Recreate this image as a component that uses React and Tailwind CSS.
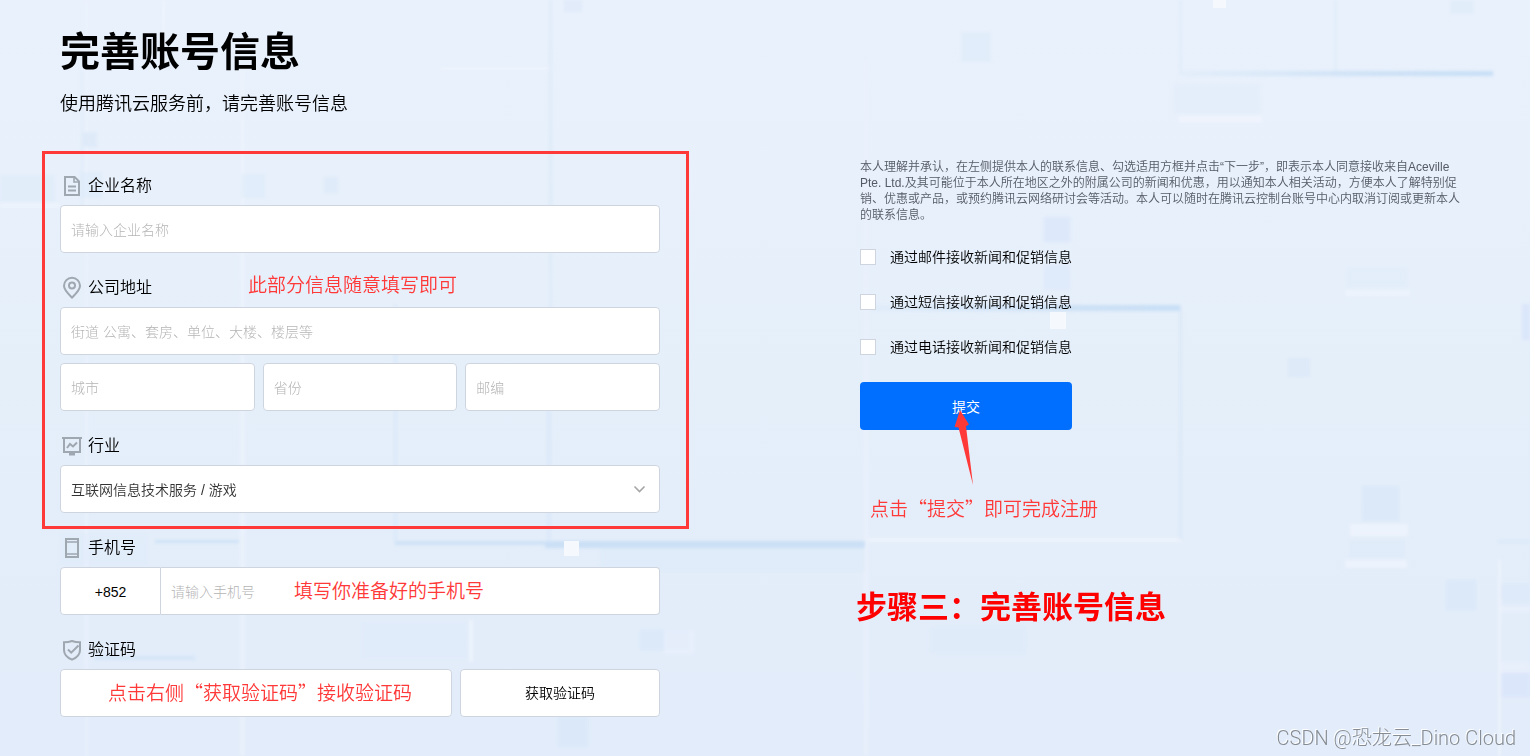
import React from "react";

const iconProps = {
  width: 24,
  height: 24,
  viewBox: "0 0 24 24",
  fill: "none",
  stroke: "#9fa7b0",
  strokeWidth: 2,
  "aria-hidden": true,
};

function DocumentIcon() {
  return (
    <svg {...iconProps}>
      <path d="M5 3h9.6L19 7.4V21H5z" />
      <path d="M14 3v5h5" strokeWidth="1.6" />
      <path d="M8 12.5h8M8 16.5h8" />
    </svg>
  );
}

function PinIcon() {
  return (
    <svg {...iconProps}>
      <path d="M12 21.500C8 17.600 4 14.200 4 9.800a8 8 0 0 1 16 0C20 14.200 16 17.600 12 21.500z" />
      <circle cx="12" cy="9.500" r="3" />
    </svg>
  );
}

function IndustryIcon() {
  return (
    <svg {...iconProps}>
      <path d="M2 4h20" />
      <path d="M4 4v14h16V4" />
      <path d="M7 14l3-4 3 2.500 4-4" />
      <path d="M9 20h6" strokeWidth="3" />
    </svg>
  );
}

function PhoneIcon() {
  return (
    <svg {...iconProps}>
      <path d="M6 3h12v18H6z" />
      <path d="M6 6h12M6 18h12" strokeWidth="1.6" />
    </svg>
  );
}

function ShieldIcon() {
  return (
    <svg {...iconProps}>
      <path d="M12 3c2.600 1 5.200 1.300 8 1.300V12c0 4.600-3.400 7.800-8 9.600C7.400 19.800 4 16.600 4 12V4.300C6.800 4.300 9.400 4 12 3z" />
      <path d="M8 11.500l3.200 3.200L18.500 7.500" />
    </svg>
  );
}

function Backdrop() {
  return (
    <svg
      className="absolute inset-0 h-full w-full"
      viewBox="0 0 1530 756"
      preserveAspectRatio="none"
      aria-hidden="true"
    >
      <defs>
        <filter id="soft" x="-5%" y="-20%" width="110%" height="140%">
          <feGaussianBlur stdDeviation="1.5" />
        </filter>
        <linearGradient id="streak" x1="0" x2="1" y1="0" y2="0">
          <stop offset="0" stopColor="#cbe0f5" stopOpacity="0.15" />
          <stop offset="0.6" stopColor="#cbe0f5" stopOpacity="0.9" />
          <stop offset="1" stopColor="#c8dff6" />
        </linearGradient>
      </defs>
      <g filter="url(#soft)">
        <g fill="#eff4fd" opacity="0.8">
          <rect x="85" y="0" width="3" height="756" opacity="0.6" />
          <rect x="162" y="0" width="3" height="70" />
          <rect x="240" y="70" width="5" height="686" opacity="0.8" />
          <rect x="440" y="67" width="110" height="3" />
          <rect x="864" y="60" width="4" height="696" opacity="0.7" />
          <rect x="868" y="538" width="314" height="4" />
          <rect x="1178" y="115" width="85" height="8" />
          <rect x="1345" y="290" width="65" height="6" />
          <rect x="1350" y="524" width="58" height="12" />
          <rect x="1345" y="560" width="62" height="8" />
          <rect x="1498" y="560" width="3" height="196" />
          <rect x="1500" y="600" width="30" height="12" opacity="0.6" />
          <rect x="1500" y="662" width="30" height="10" opacity="0.6" />
          <rect x="0" y="203" width="60" height="5" />
          <rect x="469" y="620" width="4" height="42" />
          <rect x="664" y="630" width="30" height="24" opacity="0.6" />
        </g>
        <g fill="#d9e7f8" opacity="0.75">
          <rect x="549" y="0" width="3" height="310" opacity="0.7" />
          <rect x="81" y="70" width="2" height="140" opacity="0.6" />
          <rect x="82" y="132" width="15" height="15" opacity="0.8" />
          <rect x="0" y="175" width="55" height="27" opacity="0.45" />
          <rect x="80" y="172" width="22" height="26" opacity="0.6" />
          <rect x="241" y="174" width="24" height="24" opacity="0.6" />
          <rect x="324" y="177" width="14" height="16" opacity="0.7" />
          <rect x="564" y="0" width="18" height="12" opacity="0.7" />
          <rect x="961" y="32" width="30" height="30" opacity="0.6" />
          <rect x="1450" y="0" width="24" height="14" opacity="0.6" />
          <rect x="1179" y="0" width="3" height="75" opacity="0.6" />
          <rect x="1334" y="0" width="3" height="75" opacity="0.5" />
          <rect x="1179" y="306" width="3" height="234" opacity="0.8" />
          <rect x="1174" y="84" width="86" height="30" opacity="0.25" />
          <rect x="1346" y="267" width="62" height="21" opacity="0.3" />
          <rect x="1288" y="358" width="22" height="19" opacity="0.8" />
          <rect x="1362" y="486" width="37" height="35" />
          <rect x="1349" y="540" width="56" height="18" opacity="0.4" />
          <rect x="1446" y="580" width="30" height="30" />
          <rect x="1498" y="540" width="32" height="3" />
          <rect x="1501" y="584" width="29" height="22" opacity="0.7" />
          <rect x="394" y="305" width="3" height="238" />
          <rect x="547" y="410" width="4" height="135" />
          <rect x="640" y="630" width="24" height="20" />
          <rect x="664" y="630" width="26" height="20" opacity="0.4" />
          <rect x="558" y="717" width="30" height="30" />
          <rect x="362" y="622" width="106" height="36" opacity="0.3" />
          <rect x="60" y="533" width="88" height="32" opacity="0.3" />
          <rect x="930" y="626" width="96" height="28" opacity="0.25" />
        </g>
        <g fill="#dbe6fa">
          <rect x="1044" y="217" width="26" height="25" opacity="0.8" />
          <rect x="1044" y="265" width="26" height="25" opacity="0.6" />
          <rect x="1501" y="673" width="29" height="24" />
          <rect x="1522" y="304" width="8" height="36" />
        </g>
        <rect x="1182" y="71" width="311" height="5" fill="url(#streak)" />
        <rect x="870" y="305" width="310" height="6" fill="url(#streak)" />
        <rect x="155" y="540" width="84" height="3" fill="#cfe2f6" />
        <rect x="395" y="541" width="155" height="4" fill="#cfe2f6" />
        <rect x="545" y="541" width="320" height="7" fill="#cbdff5" />
        <rect x="600" y="548" width="265" height="24" fill="#d9e8f8" opacity="0.4" />
        <rect x="95" y="656" width="100" height="4" fill="#d5e5f7" />
      </g>
      <g fill="#f5f8fd">
        <rect x="564" y="541" width="15" height="15" />
        <rect x="1050" y="312" width="16" height="17" />
        <rect x="1213" y="0" width="13" height="8" />
      </g>
    </svg>
  );
}

function FieldLabel({ icon, htmlFor, children }) {
  return (
    <label htmlFor={htmlFor} className="flex h-10 items-center gap-1 pt-0.5 text-base font-[350]">
      {icon}
      {children}
    </label>
  );
}

const fieldClass =
  "h-12 w-full min-w-0 rounded border border-[#cfd5de] bg-white px-2.5 pt-0.5 text-sm font-[350] text-[#333] placeholder:font-light placeholder:text-[#b5b5b5] outline-none focus:border-[#006eff]";

const noteClass =
  "pointer-events-none absolute whitespace-nowrap font-['Noto_Sans_CJK_SC',sans-serif] text-[19px] leading-7 font-[350] text-[#ff3838]";

function ConsentOption({ id, children }) {
  return (
    <div className="flex h-[45px] items-center gap-3.5">
      <input
        id={id}
        type="checkbox"
        className="size-4 appearance-none border border-[#cfd5de] bg-white checked:bg-[#006eff]"
      />
      <label htmlFor={id} className="text-sm font-[350]">
        {children}
      </label>
    </div>
  );
}

export default function App() {
  return (
    <div
      lang="zh-CN"
      className="relative min-h-screen overflow-hidden bg-linear-to-b from-[#e9f1fc] via-[#e5effa] to-[#e2ecfa] font-['Liberation_Sans','Noto_Sans_CJK_SC',sans-serif] text-black"
    >
      <Backdrop />
      <main className="relative px-[60px] pt-[26px] pb-[39px]">
        <header>
          <h1 className="text-[40px] leading-[52px] font-bold">完善账号信息</h1>
          <p className="mt-3 text-lg leading-7 font-[350]">使用腾讯云服务前，请完善账号信息</p>
        </header>

        <form
          className="mt-[41px] grid grid-cols-[minmax(0,600px)_minmax(0,600px)] gap-[200px]"
          onSubmit={(e) => e.preventDefault()}
        >
          <div className="flex flex-col gap-3.5 pt-1.5">
            <div className="relative flex flex-col gap-3.5">
              <div>
                <FieldLabel icon={<DocumentIcon />} htmlFor="company">
                  企业名称
                </FieldLabel>
                <input id="company" placeholder="请输入企业名称" className={fieldClass} />
              </div>

              <div className="relative">
                <FieldLabel icon={<PinIcon />} htmlFor="street">
                  公司地址
                </FieldLabel>
                <div className="flex flex-col gap-2">
                  <input
                    id="street"
                    placeholder="街道 公寓、套房、单位、大楼、楼层等"
                    className={fieldClass}
                  />
                  <div className="grid grid-cols-3 gap-2">
                    <input aria-label="城市" placeholder="城市" className={fieldClass} />
                    <input aria-label="省份" placeholder="省份" className={fieldClass} />
                    <input aria-label="邮编" placeholder="邮编" className={fieldClass} />
                  </div>
                </div>
                <span className={`${noteClass} top-[3px] left-[188px]`}>此部分信息随意填写即可</span>
              </div>

              <div>
                <FieldLabel icon={<IndustryIcon />} htmlFor="industry">
                  行业
                </FieldLabel>
                <div className="relative">
                  <select id="industry" className={`${fieldClass} appearance-none`}>
                    <option>互联网信息技术服务 / 游戏</option>
                  </select>
                  <svg
                    className="pointer-events-none absolute top-4 right-3"
                    width="16"
                    height="16"
                    viewBox="0 0 16 16"
                    fill="none"
                    stroke="#a6a6a6"
                    strokeWidth="1.6"
                    aria-hidden="true"
                  >
                    <path d="M2.500 5.500l5 5 5-5" />
                  </svg>
                </div>
              </div>

              <div className="pointer-events-none absolute -top-3.5 -right-[29px] -bottom-4 -left-[18px] border-3 border-[#ff3838]" />
            </div>

            <div>
              <FieldLabel icon={<PhoneIcon />} htmlFor="phone">
                手机号
              </FieldLabel>
              <div className="relative flex">
                <button
                  type="button"
                  aria-label="国家/地区代码 +852"
                  className="h-12 w-[101px] shrink-0 rounded-l border border-[#cfd5de] bg-white pt-0.5 text-sm"
                >
                  +852
                </button>
                <input
                  id="phone"
                  type="tel"
                  placeholder="请输入手机号"
                  className={`${fieldClass} rounded-l-none border-l-0`}
                />
                <span className={`${noteClass} top-[9px] left-[234px]`}>填写你准备好的手机号</span>
              </div>
            </div>

            <div>
              <FieldLabel icon={<ShieldIcon />} htmlFor="code">
                验证码
              </FieldLabel>
              <div className="flex gap-2">
                <div className="relative min-w-0 flex-1">
                  <input id="code" className={fieldClass} />
                  <span className={`${noteClass} top-[9px] left-12`}>
                    点击右侧“获取验证码”接收验证码
                  </span>
                </div>
                <button
                  type="button"
                  className="h-12 w-[200px] shrink-0 rounded border border-[#cfd5de] bg-white text-sm font-[350]"
                >
                  获取验证码
                </button>
              </div>
            </div>
          </div>

          <div>
            <p className="text-xs leading-4 font-[350] text-[#555b66]">
              本人理解并承认，在左侧提供本人的联系信息、勾选适用方框并点击“下一步”，即表示本人同意接收来自Aceville
              Pte.
              Ltd.及其可能位于本人所在地区之外的附属公司的新闻和优惠，用以通知本人相关活动，方便本人了解特别促销、优惠或产品，或预约腾讯云网络研讨会等活动。本人可以随时在腾讯云控制台账号中心内取消订阅或更新本人的联系信息。
            </p>
            <div className="mt-[11px]">
              <ConsentOption id="consent-mail">通过邮件接收新闻和促销信息</ConsentOption>
              <ConsentOption id="consent-sms">通过短信接收新闻和促销信息</ConsentOption>
              <ConsentOption id="consent-call">通过电话接收新闻和促销信息</ConsentOption>
            </div>
            <div className="relative mt-[13px]">
              <button
                type="submit"
                className="h-12 w-[212px] rounded bg-[#006eff] pt-0.5 text-sm text-white"
              >
                提交
              </button>
              <svg
                className="pointer-events-none absolute top-7 left-[92px]"
                width="24"
                height="76"
                viewBox="0 0 24 76"
                fill="#ff3838"
                aria-hidden="true"
              >
                <path d="M8 0L17 14.500l-3 1.800L21 75 6.500 17.500l-4-.5z" />
              </svg>
            </div>
            <p className="mt-16 pl-2.5 font-['Noto_Sans_CJK_SC',sans-serif] text-[19px] leading-7 font-[350] text-[#ff3838]">
              点击“提交”即可完成注册
            </p>
            <h2 className="mt-[63px] -ml-1 font-['Noto_Sans_CJK_SC',sans-serif] text-[31px] leading-10 font-bold text-[#ff0000]">
              步骤三：完善账号信息
            </h2>
          </div>
        </form>
      </main>
      <div className="absolute right-3.5 bottom-1 text-xl leading-7 font-light text-[#868c94] [text-shadow:-1px_-1px_0_#fff] font-['Roboto','Noto_Sans_CJK_SC',sans-serif]">
        CSDN @恐龙云_Dino Cloud
      </div>
    </div>
  );
}
